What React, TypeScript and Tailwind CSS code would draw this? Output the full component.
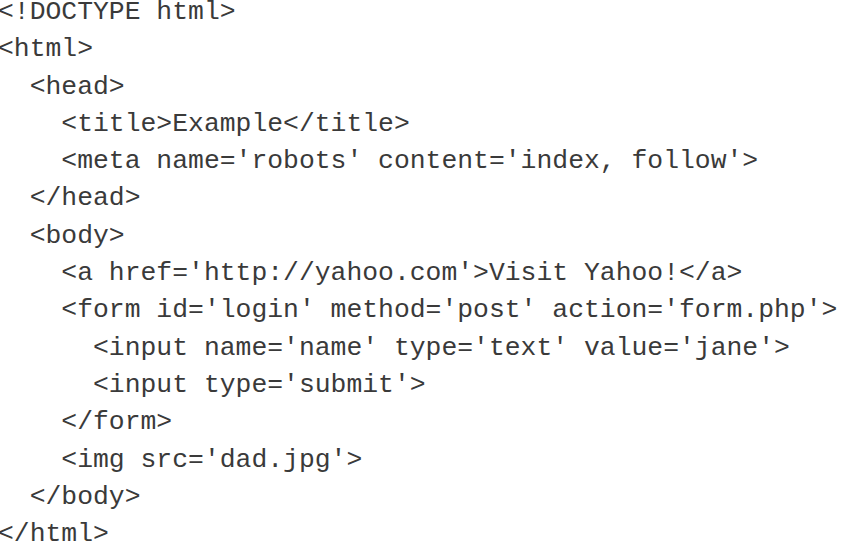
const lines = [
  "<!DOCTYPE html>",
  "<html>",
  "  <head>",
  "    <title>Example</title>",
  "    <meta name='robots' content='index, follow'>",
  "  </head>",
  "  <body>",
  "    <a href='http://yahoo.com'>Visit Yahoo!</a>",
  "    <form id='login' method='post' action='form.php'>",
  "      <input name='name' type='text' value='jane'>",
  "      <input type='submit'>",
  "    </form>",
  "    <img src='dad.jpg'>",
  "  </body>",
  "</html>",
];

export default function App() {
  return (
    <div className="w-[841px] h-[546px] overflow-hidden bg-white">
      <pre className="-mt-[6px] -ml-[2px] font-['Liberation_Mono',monospace] text-[26.4px] leading-[37.3px] text-[#3a3a3a]">
        {lines.join("\n")}
      </pre>
    </div>
  );
}
